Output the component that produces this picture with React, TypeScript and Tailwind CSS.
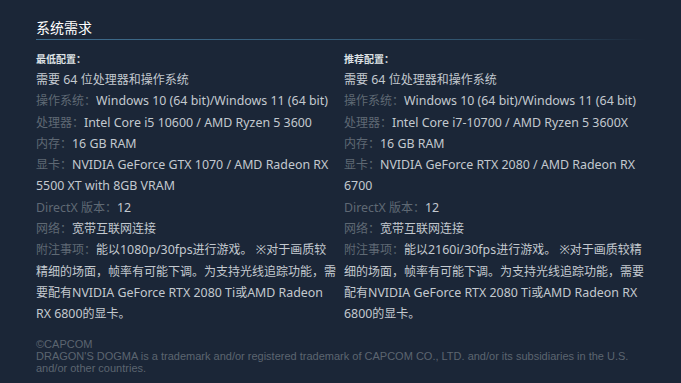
import React from 'react';

type Row = { label?: string; value: string };

interface ReqColumnProps {
  title: string;
  rows: Row[];
}

const minRows: Row[] = [
  { value: '需要 64 位处理器和操作系统' },
  { label: '操作系统：', value: 'Windows 10 (64 bit)/Windows 11 (64 bit)' },
  { label: '处理器：', value: 'Intel Core i5 10600 / AMD Ryzen 5 3600' },
  { label: '内存：', value: '16 GB RAM' },
  { label: '显卡：', value: 'NVIDIA GeForce GTX 1070 / AMD Radeon RX 5500 XT with 8GB VRAM' },
  { label: 'DirectX 版本：', value: '12' },
  { label: '网络：', value: '宽带互联网连接' },
  {
    label: '附注事项：',
    value:
      '能以1080p/30fps进行游戏。 ※对于画质较精细的场面，帧率有可能下调。为支持光线追踪功能，需要配有NVIDIA GeForce RTX 2080 Ti或AMD Radeon RX 6800的显卡。'
  }
];

const recRows: Row[] = [
  { value: '需要 64 位处理器和操作系统' },
  { label: '操作系统：', value: 'Windows 10 (64 bit)/Windows 11 (64 bit)' },
  { label: '处理器：', value: 'Intel Core i7-10700 / AMD Ryzen 5 3600X' },
  { label: '内存：', value: '16 GB RAM' },
  { label: '显卡：', value: 'NVIDIA GeForce RTX 2080 / AMD Radeon RX 6700' },
  { label: 'DirectX 版本：', value: '12' },
  { label: '网络：', value: '宽带互联网连接' },
  {
    label: '附注事项：',
    value:
      '能以2160i/30fps进行游戏。 ※对于画质较精细的场面，帧率有可能下调。为支持光线追踪功能，需要配有NVIDIA GeForce RTX 2080 Ti或AMD Radeon RX 6800的显卡。'
  }
];

// latin glyphs in the reference run a little wider than the CJK ones
const Mixed: React.FC<{ text: string }> = ({ text }) => (
  <>
    {text.split(/([\u3000-\u9fff\uff00-\uffef]+)/).map((part, i) =>
      /[\u3000-\u9fff\uff00-\uffef]/.test(part) ? (
        <span key={i}>{part}</span>
      ) : (
        <span key={i} className="text-[12.4px]">
          {part}
        </span>
      )
    )}
  </>
);

const ReqColumn: React.FC<ReqColumnProps> = ({ title, rows }) => (
  <div>
    <div className="text-[10px] leading-[16px] font-bold text-[#dfe3e6]">{title}</div>
    <ul className="mt-[2px] text-[12px] leading-[21.3px] text-[#c3c9cf]">
      {rows.map((row, i) => (
        <li key={i}>
          {row.label && (
            <span className="text-[#5f6974]">
              <Mixed text={row.label} />
            </span>
          )}
          <Mixed text={row.value} />
        </li>
      ))}
    </ul>
  </div>
);

export default function App() {
  return (
    <div
      className="w-[681px] h-[383px] bg-[#1b2637] overflow-hidden pl-[36px] pr-[35px]"
      style={{ fontFamily: '"Noto Sans", "Noto Sans CJK SC", sans-serif' }}
    >
      {/* section heading */}
      <h2 className="pt-[18px] pb-px text-[14px] leading-[20px] text-white font-normal">系统需求</h2>
      <div className="h-px bg-gradient-to-r from-[#3f6d8e] via-[#2f5069] via-80% to-transparent" />

      <div className="mt-[11px] grid grid-cols-[300px_302px] gap-x-[8px]">
        <ReqColumn title="最低配置：" rows={minRows} />
        <ReqColumn title="推荐配置：" rows={recRows} />
      </div>

      {/* legal */}
      <div
        className="mt-[13px] text-[11px] leading-[12px] text-[#5b6570]"
        style={{ fontFamily: '"Liberation Sans", Arial, sans-serif' }}
      >
        <div>©CAPCOM</div>
        <div>
          DRAGON'S DOGMA is a trademark and/or registered trademark of CAPCOM CO., LTD. and/or its subsidiaries in
          the U.S. and/or other countries.
        </div>
      </div>
    </div>
  );
}
